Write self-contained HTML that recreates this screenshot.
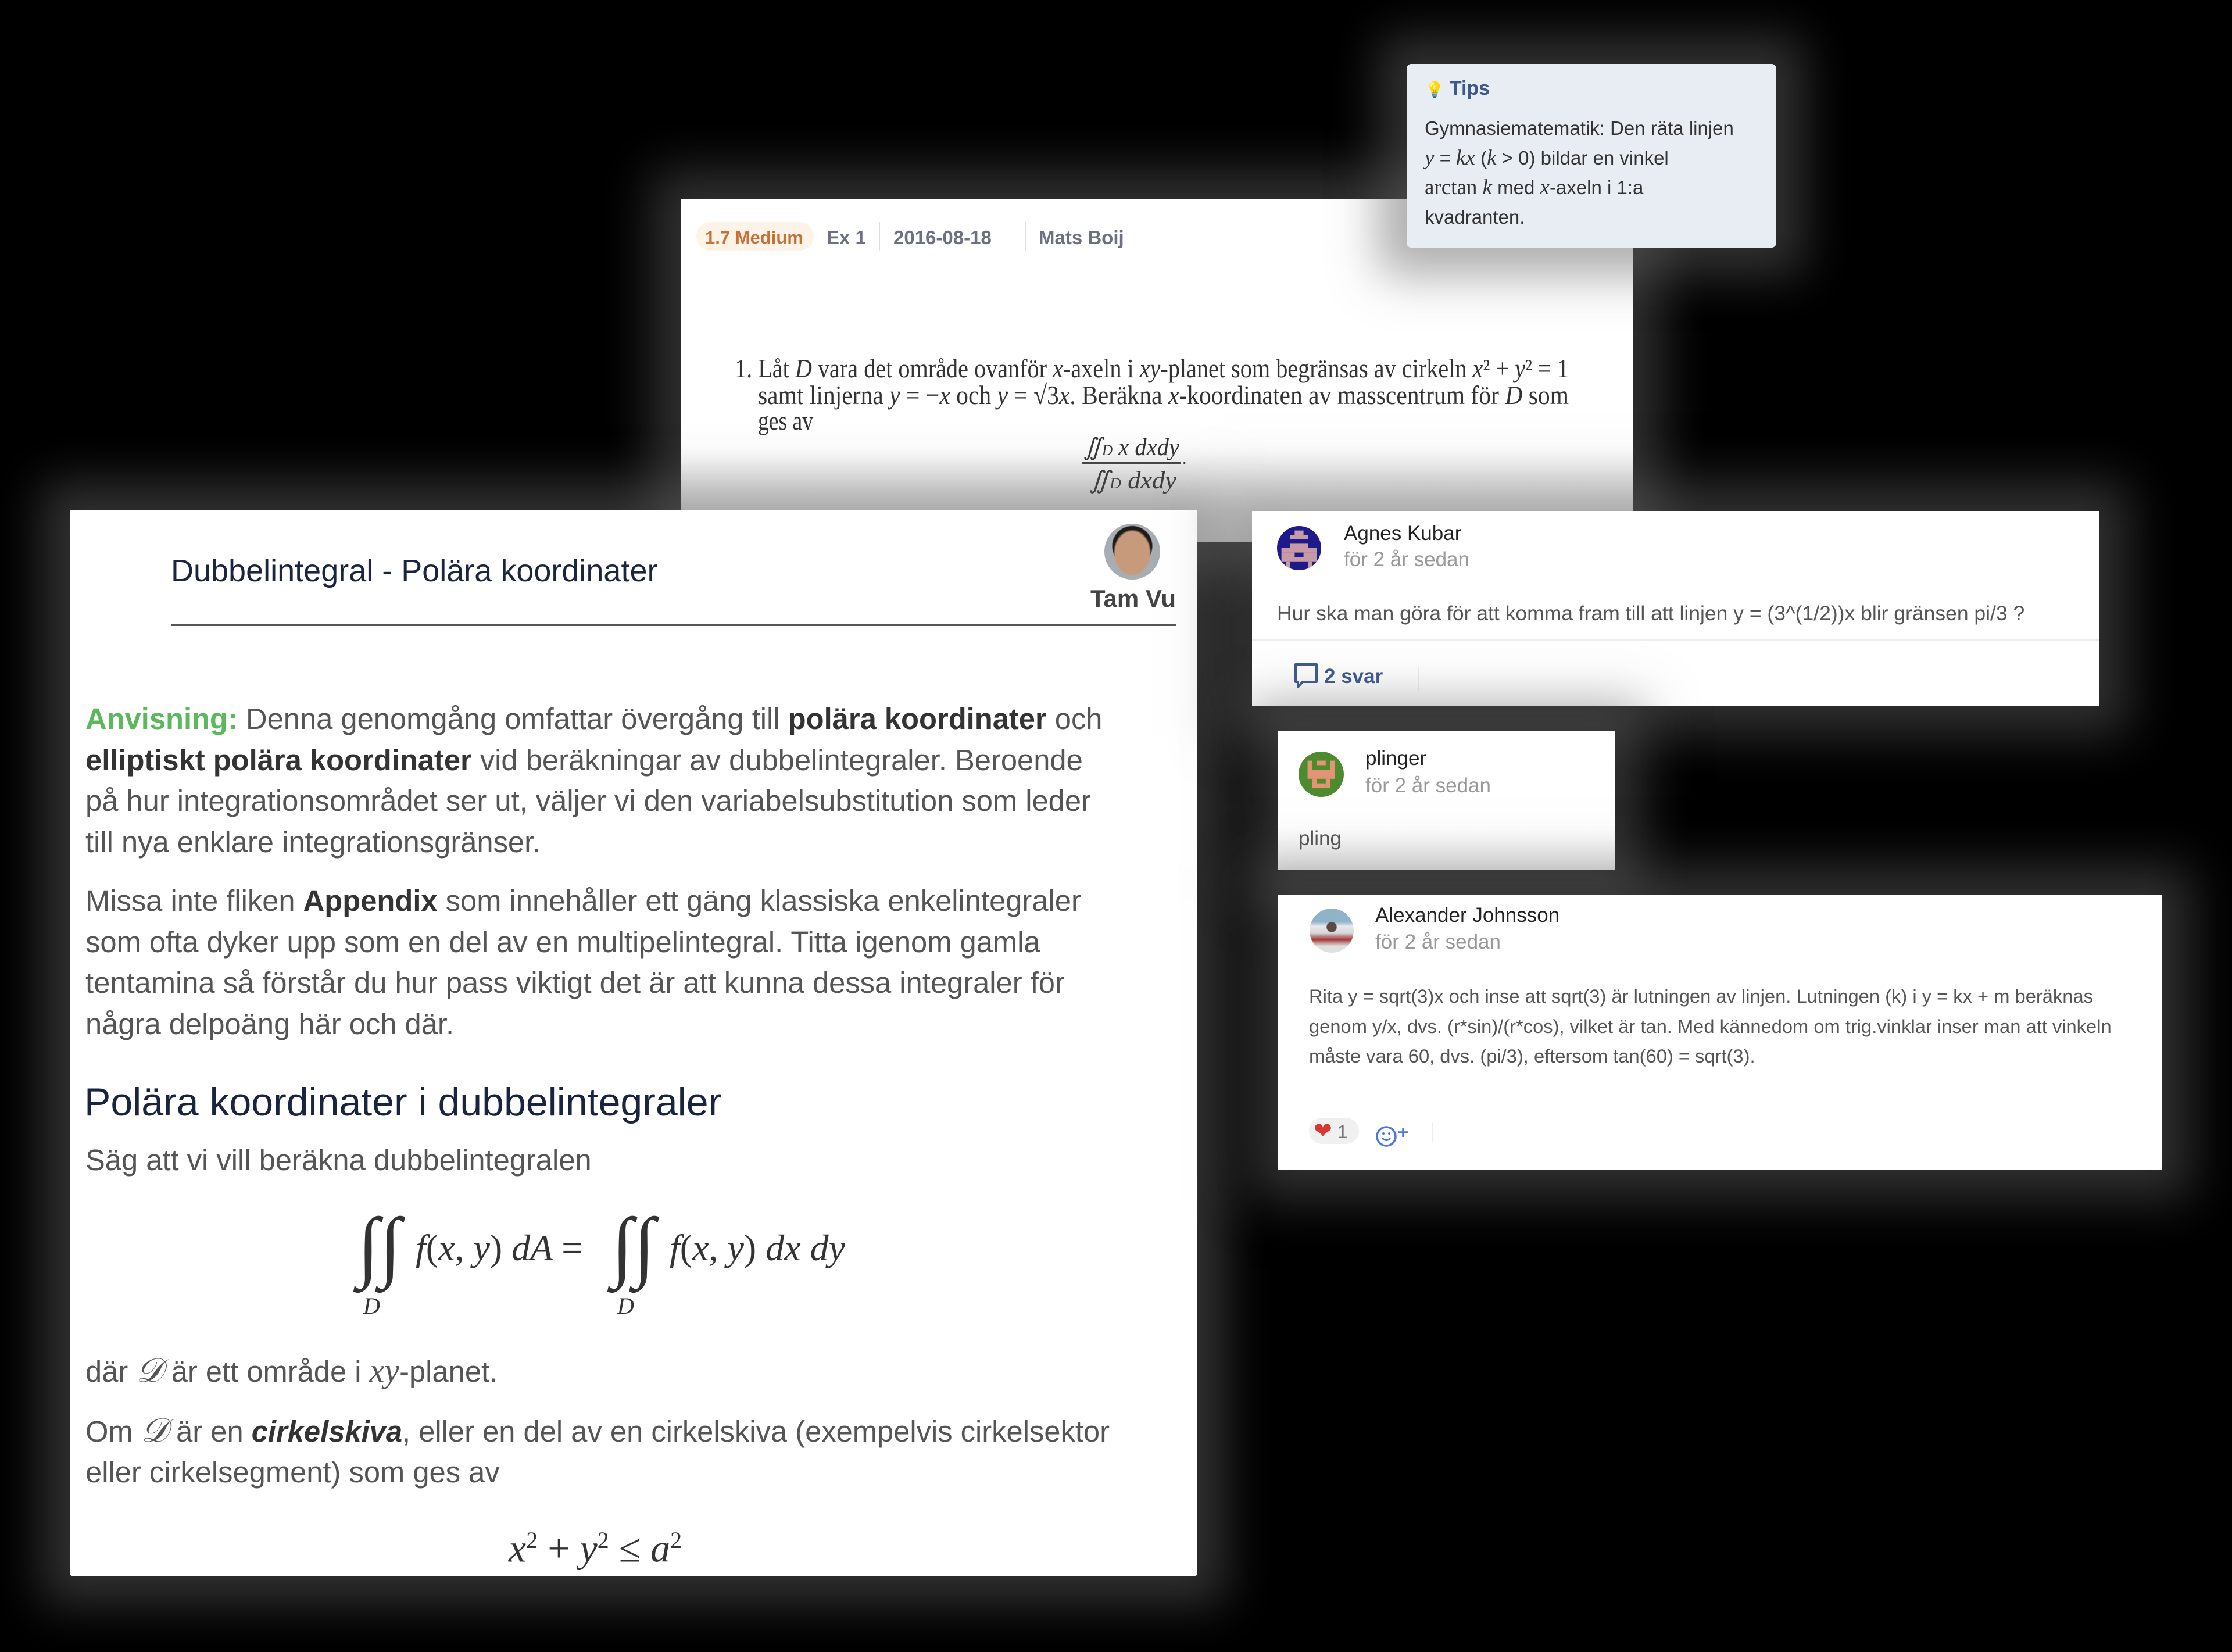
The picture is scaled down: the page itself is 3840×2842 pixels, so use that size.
<!DOCTYPE html>
<html><head><meta charset="utf-8"><style>
*{margin:0;padding:0;box-sizing:border-box}
body{width:3840px;height:2842px;background:#000;position:relative;overflow:hidden;font-family:"Liberation Sans",Arial,sans-serif}
.a{position:absolute}
.nw{white-space:nowrap}
.card{position:absolute;background:#fff}
.sh{box-shadow:0 0 80px 50px rgba(95,95,95,.5)}
.serif{font-family:"Liberation Serif","DejaVu Serif",serif}
.m{font-family:"Liberation Serif",serif;font-style:italic}
.top{z-index:5}
</style></head><body>

<!-- Problem card -->
<div class="card sh" style="left:1171px;top:343px;width:1638px;height:590px;background:linear-gradient(#fff 0,#fff 430px,#e6e6e6 590px)"></div>
<div class="a" style="left:1198px;top:382px;width:202px;height:49px;background:#fdf3e6;border-radius:24px"></div>
<div class="a nw" style="left:1213px;top:390px;font-size:31px;font-weight:bold;color:#c8703a;line-height:38px">1.7 Medium</div>
<div class="a nw" style="left:1422px;top:390px;font-size:33px;font-weight:bold;color:#6c7080;line-height:38px">Ex 1</div>
<div class="a" style="left:1512px;top:382px;width:2px;height:50px;background:#ddd"></div>
<div class="a nw" style="left:1537px;top:390px;font-size:33px;font-weight:bold;color:#6c7080;line-height:38px">2016-08-18</div>
<div class="a" style="left:1764px;top:382px;width:2px;height:50px;background:#ddd"></div>
<div class="a nw" style="left:1787px;top:390px;font-size:33px;font-weight:bold;color:#6c7080;line-height:38px">Mats Boij</div>
<svg class="a" style="left:1171px;top:343px" width="1638" height="560">
<g font-family="Liberation Serif,serif" font-size="46" fill="#333">
<text x="93" y="306" textLength="1435" lengthAdjust="spacingAndGlyphs">1. Låt <tspan font-style="italic">D</tspan> vara det område ovanför <tspan font-style="italic">x</tspan>-axeln i <tspan font-style="italic">xy</tspan>-planet som begränsas av cirkeln <tspan font-style="italic">x</tspan>² + <tspan font-style="italic">y</tspan>² = 1</text>
<text x="133" y="352" textLength="1395" lengthAdjust="spacingAndGlyphs">samt linjerna <tspan font-style="italic">y</tspan> = −<tspan font-style="italic">x</tspan> och <tspan font-style="italic">y</tspan> = √3<tspan font-style="italic">x</tspan>. Beräkna <tspan font-style="italic">x</tspan>-koordinaten av masscentrum för <tspan font-style="italic">D</tspan> som</text>
<text x="133" y="396" textLength="95" lengthAdjust="spacingAndGlyphs">ges av</text>
<text x="693" y="440" font-style="italic" font-size="42" textLength="165" lengthAdjust="spacingAndGlyphs">∬<tspan font-size="26">D</tspan> x dxdy</text>
<rect x="691" y="452" width="170" height="3" fill="#444"/>
<text x="863" y="455" font-size="30">.</text>
<text x="703" y="497" font-style="italic" font-size="42" textLength="150" lengthAdjust="spacingAndGlyphs">∬<tspan font-size="26">D</tspan> dxdy</text>
</g></svg>

<!-- Tips card -->
<div class="card sh top" style="left:2420px;top:110px;width:636px;height:316px;background:#e8edf4;border-radius:8px"></div>
<div class="a nw top" style="left:2452px;top:130px;font-size:34px;font-weight:bold;color:#3d5a8c;line-height:44px"><span style="color:#f2d060;font-size:26px">&#128161;</span> Tips</div>
<div class="a nw top" style="left:2451px;top:195px;font-size:33px;color:#333;line-height:51px">Gymnasiematematik: Den räta linjen<br><span class="m" style="font-size:37px">y</span> = <span class="m" style="font-size:37px">kx</span> (<span class="m" style="font-size:37px">k</span> &gt; 0) bildar en vinkel<br><span class="serif" style="font-size:37px">arctan</span> <span class="m" style="font-size:37px">k</span> med <span class="m" style="font-size:37px">x</span>-axeln i 1:a<br>kvadranten.</div>

<!-- Main card -->
<div class="card sh" style="left:120px;top:877px;width:1940px;height:1834px;border-radius:4px"></div>
<div class="a nw" style="left:294px;top:950px;font-size:54px;color:#1c2540;line-height:64px">Dubbelintegral - Polära koordinater</div>
<div class="a" style="left:1900px;top:901px;width:96px;height:96px;border-radius:50%;background:radial-gradient(ellipse 34% 42% at 50% 52%,#c89a7c 0 90%,transparent 100%),radial-gradient(circle at 50% 40%,#1e1a18 0 45%,#a7adb3 47%)"></div>
<div class="a nw" style="left:1860px;top:1006px;width:163px;text-align:right;font-size:42px;font-weight:bold;color:#444;line-height:48px">Tam Vu</div>
<div class="a" style="left:294px;top:1074px;width:1729px;height:3px;background:#555"></div>

<div class="a nw" style="left:147px;top:1202px;font-size:50.7px;color:#555;line-height:70.5px">
<b style="color:#5cb85c">Anvisning:</b> Denna genomgång omfattar övergång till <b style="color:#333">polära koordinater</b> och<br>
<b style="color:#333">elliptiskt polära koordinater</b> vid beräkningar av dubbelintegraler. Beroende<br>
på hur integrationsområdet ser ut, väljer vi den variabelsubstitution som leder<br>
till nya enklare integrationsgränser.</div>
<div class="a nw" style="left:147px;top:1515px;font-size:50.7px;color:#555;line-height:70.5px">
Missa inte fliken <b style="color:#333">Appendix</b> som innehåller ett gäng klassiska enkelintegraler<br>
som ofta dyker upp som en del av en multipelintegral. Titta igenom gamla<br>
tentamina så förstår du hur pass viktigt det är att kunna dessa integraler för<br>
några delpoäng här och där.</div>
<div class="a nw" style="left:145px;top:1851px;font-size:68px;color:#1a2340;line-height:90px">Polära koordinater i dubbelintegraler</div>
<div class="a nw" style="left:147px;top:1961px;font-size:50.7px;color:#555;line-height:70px">Säg att vi vill beräkna dubbelintegralen</div>

<svg class="a" style="left:560px;top:2060px" width="1000" height="220">
<g font-family="Liberation Serif,serif" fill="#333">
<text x="55" y="128" font-size="135" font-style="italic" textLength="75" lengthAdjust="spacingAndGlyphs">∫∫</text>
<text x="65" y="200" font-size="40" font-style="italic">D</text>
<text x="155" y="108" font-size="64" font-style="italic">f<tspan font-style="normal">(</tspan>x<tspan font-style="normal">,</tspan> y<tspan font-style="normal">)</tspan> dA <tspan font-style="normal">=</tspan></text>
<text x="492" y="128" font-size="135" font-style="italic" textLength="75" lengthAdjust="spacingAndGlyphs">∫∫</text>
<text x="502" y="200" font-size="40" font-style="italic">D</text>
<text x="592" y="108" font-size="64" font-style="italic">f<tspan font-style="normal">(</tspan>x<tspan font-style="normal">,</tspan> y<tspan font-style="normal">)</tspan> dx dy</text>
</g></svg>

<div class="a nw" style="left:147px;top:2323px;font-size:50.7px;color:#555;line-height:70px">där <span class="m" style="font-size:58px">𝒟</span> är ett område i <span class="m" style="font-size:58px">xy</span>-planet.</div>
<div class="a nw" style="left:147px;top:2426px;font-size:50.7px;color:#555;line-height:70px">Om <span class="m" style="font-size:58px">𝒟</span> är en <b style="color:#333;font-style:italic">cirkelskiva</b>, eller en del av en cirkelskiva (exempelvis cirkelsektor<br>eller cirkelsegment) som ges av</div>
<div class="a nw serif" style="left:875px;top:2610px;font-size:68px;color:#333;line-height:80px"><i>x</i><sup style="font-size:40px">2</sup> + <i>y</i><sup style="font-size:40px">2</sup> ≤ <i>a</i><sup style="font-size:40px">2</sup></div>

<!-- Agnes card -->
<div class="card sh" style="left:2154px;top:879px;width:1458px;height:335px"></div>
<svg class="a" style="left:2197px;top:905px" width="76" height="76" viewBox="0 0 10 10"><defs><clipPath id="c1"><circle cx="5" cy="5" r="5"/></clipPath></defs><g clip-path="url(#c1)"><rect width="10" height="10" fill="#1e1a8a"/><g fill="#c79aa8"><rect x="4" y="1" width="2" height="1"/><rect x="3" y="2" width="4" height="1"/><rect x="3" y="4" width="4" height="1"/><rect x="1" y="5" width="8" height="1"/><rect x="1" y="6" width="3" height="1"/><rect x="6" y="6" width="3" height="1"/><rect x="1" y="7" width="8" height="1"/><rect x="2" y="8" width="1" height="2"/><rect x="7" y="8" width="1" height="2"/></g></g></svg>
<div class="a nw" style="left:2312px;top:897px;font-size:35px;color:#222;line-height:42px">Agnes Kubar</div>
<div class="a nw" style="left:2312px;top:942px;font-size:35px;color:#999;line-height:42px">för 2 år sedan</div>
<div class="a nw" style="left:2197px;top:1034px;font-size:35.5px;color:#555;line-height:42px">Hur ska man göra för att komma fram till att linjen y = (3^(1/2))x blir gränsen pi/3 ?</div>
<div class="a" style="left:2154px;top:1100px;width:1458px;height:3px;background:#eee"></div>
<svg class="a" style="left:2225px;top:1140px" width="44" height="46" viewBox="0 0 44 46"><path d="M4 3h36v30H16l-8 9v-9H4z" fill="none" stroke="#3c5a8e" stroke-width="4" stroke-linejoin="round"/></svg>
<div class="a nw" style="left:2278px;top:1142px;font-size:35px;font-weight:bold;color:#3c5a8e;line-height:44px">2 svar</div>
<div class="a" style="left:2440px;top:1148px;width:2px;height:40px;background:#eee"></div>

<!-- pling card -->
<div class="card sh" style="left:2199px;top:1258px;width:580px;height:238px;background:linear-gradient(#fff 70%,#f1f1f1)"></div>
<svg class="a" style="left:2234px;top:1293px" width="78" height="78" viewBox="0 0 10 10"><defs><clipPath id="c2"><circle cx="5" cy="5" r="5"/></clipPath></defs><g clip-path="url(#c2)"><rect width="10" height="10" fill="#4e8a2e"/><g fill="#e39474"><rect x="2" y="2" width="1" height="2"/><rect x="7" y="2" width="1" height="2"/><rect x="4" y="2" width="2" height="1"/><rect x="2" y="4" width="6" height="2"/><rect x="3" y="6" width="1" height="2"/><rect x="6" y="6" width="1" height="2"/><rect x="4" y="7" width="2" height="1"/></g></g></svg>
<div class="a nw" style="left:2349px;top:1284px;font-size:35px;color:#222;line-height:42px">plinger</div>
<div class="a nw" style="left:2349px;top:1331px;font-size:35px;color:#999;line-height:42px">för 2 år sedan</div>
<div class="a nw" style="left:2234px;top:1422px;font-size:35px;color:#555;line-height:42px">pling</div>

<!-- Alexander card -->
<div class="card sh" style="left:2199px;top:1540px;width:1521px;height:473px"></div>
<div class="a" style="left:2253px;top:1563px;width:76px;height:76px;border-radius:50%;background:radial-gradient(circle at 50% 42%,#5a4a40 0 14%,transparent 16%),linear-gradient(#8fb3c9 0 30%,#e8e8ec 40%,#d8d8dc 55%,#a33a3a 70%,#e0e0e0 85%)"></div>
<div class="a nw" style="left:2366px;top:1554px;font-size:35px;color:#222;line-height:42px">Alexander Johnsson</div>
<div class="a nw" style="left:2366px;top:1600px;font-size:35px;color:#999;line-height:42px">för 2 år sedan</div>
<div class="a nw" style="left:2252px;top:1688px;font-size:32.7px;color:#555;line-height:51.5px">Rita y = sqrt(3)x och inse att sqrt(3) är lutningen av linjen. Lutningen (k) i y = kx + m beräknas<br>genom y/x, dvs. (r*sin)/(r*cos), vilket är tan. Med kännedom om trig.vinklar inser man att vinkeln<br>måste vara 60, dvs. (pi/3), eftersom tan(60) = sqrt(3).</div>
<div class="a" style="left:2252px;top:1923px;width:86px;height:45px;border-radius:23px;background:#f0f0f0"></div>
<div class="a nw" style="left:2260px;top:1924px;font-size:32px;color:#777;line-height:44px"><span style="color:#d93636;font-size:38px">&#10084;</span> 1</div>
<svg class="a" style="left:2366px;top:1930px" width="64" height="50" viewBox="0 0 64 50"><circle cx="19" cy="25" r="16" fill="none" stroke="#4a78d8" stroke-width="3.5"/><path d="M12 28q7 7 14 0" fill="none" stroke="#4a78d8" stroke-width="3"/><circle cx="14" cy="20" r="2" fill="#4a78d8"/><circle cx="24" cy="20" r="2" fill="#4a78d8"/><path d="M40 18h16M48 10v16" stroke="#4a78d8" stroke-width="3.5"/></svg>
<div class="a" style="left:2464px;top:1930px;width:2px;height:36px;background:#eee"></div>

</body></html>
